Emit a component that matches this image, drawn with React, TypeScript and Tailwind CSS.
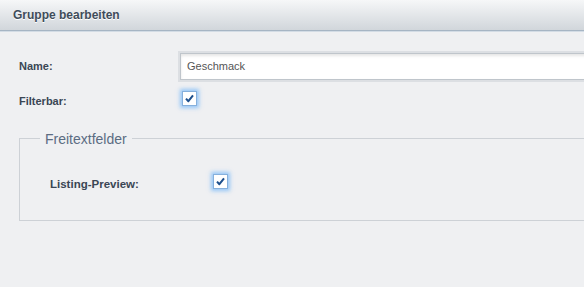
import React from "react";

function Check() {
    return (
        <span className="flex h-[15px] w-[15px] items-center justify-center border border-[#86b0dc] bg-white shadow-[0_0_4px_2px_rgba(110,180,250,0.7)]">
            <svg width="11" height="11" viewBox="0 0 11 11">
                <path d="M2 5.6 L4.4 8.2 L9 2.4" fill="none" stroke="#1d4f8c" strokeWidth="2" strokeLinejoin="round" />
            </svg>
        </span>
    );
}

export default function App() {
    return (
        <div className="h-[287px] w-[584px] overflow-hidden bg-[#eff0f2] font-['Liberation_Sans',Arial,sans-serif]">
            {/* Header */}
            <div className="flex h-[31px] items-center border-b border-[#a6b5c4] bg-gradient-to-b from-[#f6f7f8] to-[#d1d6db] pl-[13px]">
                <span className="text-[12px] font-bold text-[#3f4c5a] [text-shadow:0_1px_0_#fff]">Gruppe bearbeiten</span>
            </div>
            <div className="h-[1px] bg-[#d3dce5]" />

            <div className="w-[640px] pl-[19px] pt-[21px]">
                {/* Name */}
                <div className="flex items-center">
                    <label className="w-[161px] text-[11px] font-bold text-[#3a4654]">Name:</label>
                    <div className="flex h-[27px] flex-1 items-center border border-[#bfc5cb] bg-white pl-[6px] text-[11px] text-[#555] shadow-[inset_0_2px_3px_rgba(0,0,0,0.1)] ring-2 ring-[#dcdfe3]">
                        Geschmack
                    </div>
                </div>

                {/* Filterbar */}
                <div className="mt-[8px] flex items-center">
                    <label className="w-[163px] pt-[5px] text-[11px] font-bold text-[#3a4654]">Filterbar:</label>
                    <Check />
                </div>

                {/* Freitextfelder */}
                <fieldset className="mt-[21px] h-[90px] border border-[#cdd1d6]">
                    <legend className="ml-[20px] px-[5px] text-[14px] leading-[16px] text-[#5b6c82]">Freitextfelder</legend>
                    <div className="mt-[23px] flex items-center pl-[30px]">
                        <label className="w-[163px] pt-[6px] text-[11.5px] font-bold text-[#3a4654]">Listing-Preview:</label>
                        <Check />
                    </div>
                </fieldset>
            </div>
        </div>
    );
}
